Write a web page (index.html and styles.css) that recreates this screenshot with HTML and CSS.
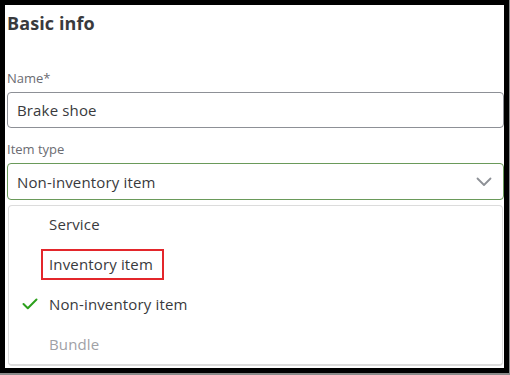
FILE: index.html
```html
<!DOCTYPE html>
<html lang="en">
<head>
  <meta charset="UTF-8">
  <title>Basic info</title>
  <link rel="stylesheet" href="styles.css">
</head>
<body>
  <div class="frame">
    <h2 class="title">Basic info</h2>

    <label class="label label-name">Name*</label>
    <div class="field">Brake shoe</div>

    <label class="label label-type">Item type</label>
    <div class="field select">
      <span>Non-inventory item</span>
      <svg class="chevron" width="16" height="10" viewBox="0 0 16 10">
        <path d="M1.5 1.5 L8 8 L14.5 1.5" fill="none" stroke="#8d9096" stroke-width="1.8" stroke-linecap="round" stroke-linejoin="round"/>
      </svg>
    </div>

    <ul class="menu">
      <li class="option"><span class="tick"></span>Service</li>
      <li class="option"><span class="tick"></span><span class="marked">Inventory item</span></li>
      <li class="option">
        <span class="tick">
          <svg width="16" height="12" viewBox="0 0 16 12">
            <path d="M1.5 6 L5.8 10.2 L14.5 1.5" fill="none" stroke="#2ca01c" stroke-width="2" stroke-linecap="round" stroke-linejoin="round"/>
          </svg>
        </span>Non-inventory item
      </li>
      <li class="option disabled"><span class="tick"></span>Bundle</li>
    </ul>
  </div>
</body>
</html>
```

FILE: styles.css
```css
body{
  margin: 0;
  background-color: #8a8a8a;
  font-family: "Open Sans", "Liberation Sans", sans-serif;
  color: #393a3d;
}

.frame{
  box-sizing: border-box;
  width: 509px;
  height: 373px;
  border: 5px solid #000000;
  background-color: #ffffff;
  padding: 6px 0 0 2px;
  overflow: hidden;
}

.title{
  margin: 0;
  font-size: 18px;
  line-height: 24px;
  font-weight: 700;
  letter-spacing: 0.1px;
}

.label{
  display: block;
  font-size: 13px;
  line-height: 18px;
  color: #6b6c72;
}

.label-name{
  margin-top: 34px;
}

.label-type{
  margin-top: 12px;
}

.field{
  box-sizing: border-box;
  display: flex;
  align-items: center;
  height: 36px;
  margin-top: 5px;
  padding-left: 9px;
  border: 1px solid #8d9096;
  border-radius: 4px;
  font-size: 15px;
  line-height: 20px;
  letter-spacing: 0.15px;
}

.select{
  height: 37px;
  margin-top: 5px;
  justify-content: space-between;
  padding-right: 11px;
  border-color: #6a9a5a;
}

.chevron{
  display: block;
}

.menu{
  list-style: none;
  margin: 5px 1px 0 1px;
  padding: 0;
  border: 1px solid #dcdcdc;
  border-bottom-width: 2px;
  border-radius: 4px;
  height: 158px;
}

.option{
  display: flex;
  align-items: center;
  height: 40px;
  padding: 0 0 4px 13px;
  box-sizing: border-box;
  font-size: 15px;
  line-height: 20px;
  letter-spacing: 0.15px;
  color: #393a3d;
}

.tick{
  display: flex;
  align-items: center;
  width: 27px;
  flex-shrink: 0;
}

.tick svg{
  display: block;
}

.marked{
  display: inline-block;
  margin-left: -8px;
  padding: 0 9px 0 6px;
  line-height: 27px;
  border: 2px solid #e3262b;
}

.disabled{
  color: #9fa1a6;
}
```
